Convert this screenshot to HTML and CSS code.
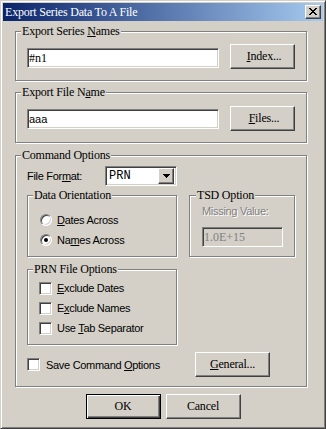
FILE: index.html
```html
<!DOCTYPE html>
<html>
<head>
<meta charset="utf-8">
<link rel="stylesheet" href="styles.css">
</head>
<body>
<div class="window">
  <div class="titlebar">
    <span class="title">Export Series Data To A File</span>
    <div class="close raised">
      <svg width="8" height="7" viewBox="0 0 8 7" shape-rendering="crispEdges"><path d="M0 0h2v1H0zM6 0h2v1H6zM1 1h2v1H1zM5 1h2v1H5zM2 2h4v1H2zM3 3h2v1H3zM2 4h4v1H2zM1 5h2v1H1zM5 5h2v1H5zM0 6h2v1H0zM6 6h2v1H6z" fill="#000"/></svg>
    </div>
  </div>
  <div class="client">
    <fieldset class="group g1">
      <legend>Export Series <u>N</u>ames</legend>
      <div class="row">
        <div class="edit serif-text e1">#n1</div>
        <div class="btn raised side-btn"><span><u>I</u>ndex...</span></div>
      </div>
    </fieldset>

    <fieldset class="group g2">
      <legend>Export File N<u>a</u>me</legend>
      <div class="row">
        <div class="edit e2">aaa</div>
        <div class="btn raised side-btn"><span><u>F</u>iles...</span></div>
      </div>
    </fieldset>

    <fieldset class="group g3">
      <legend>Command Options</legend>
      <div class="ff-row">
        <span class="ff-label">File For<u>m</u>at:</span>
        <div class="combo">
          <span class="combo-text">PRN</span>
          <div class="combo-btn raised">
            <svg width="7" height="4" viewBox="0 0 7 4" shape-rendering="crispEdges"><path d="M0 0h7v1H0zM1 1h5v1H1zM2 2h3v1H2zM3 3h1v1H3z" fill="#000"/></svg>
          </div>
        </div>
      </div>

      <div class="subgrid">
        <fieldset class="group sub orient">
          <legend>Data Orientation</legend>
          <div class="opt"><span class="radio"></span><span class="opt-label"><u>D</u>ates Across</span></div>
          <div class="opt"><span class="radio checked"></span><span class="opt-label">Na<u>m</u>es Across</span></div>
        </fieldset>

        <fieldset class="group sub tsd">
          <legend>TSD Option</legend>
          <div class="disabled-label">Missing Value:</div>
          <div class="edit disabled-edit">1.0E+15</div>
        </fieldset>

        <fieldset class="group sub prn">
          <legend>PRN File Options</legend>
          <div class="opt"><span class="chk"></span><span class="opt-label"><u>E</u>xclude Dates</span></div>
          <div class="opt"><span class="chk"></span><span class="opt-label">E<u>x</u>clude Names</span></div>
          <div class="opt"><span class="chk"></span><span class="opt-label">Use <u>T</u>ab Separator</span></div>
        </fieldset>
      </div>

      <div class="save-row">
        <div class="save-opt"><span class="chk"></span><span class="opt-label save-label">Save Command <u>O</u>ptions</span></div>
        <div class="btn raised wide-btn"><span><u>G</u>eneral...</span></div>
      </div>
    </fieldset>

    <div class="actions">
      <div class="btn default-btn wide-btn"><span>OK</span></div>
      <div class="btn raised wide-btn"><span>Cancel</span></div>
    </div>
  </div>
</div>
</body>
</html>
```

FILE: styles.css
```css
* {
  box-sizing: border-box;
}

html,
body {
  margin: 0;
  padding: 0;
  background: #d4d0c8;
}

body {
  font-family: "Liberation Sans", Arial, sans-serif;
  font-size: 11px;
  color: #000;
}

.window {
  width: 326px;
  height: 429px;
  background: #d4d0c8;
  border: 1px solid;
  border-color: #d4d0c8 #404040 #404040 #d4d0c8;
  box-shadow: inset 1px 1px #fff, inset -1px -1px #808080;
  padding: 2px;
  display: flex;
  flex-direction: column;
}

.titlebar {
  height: 18px;
  flex: none;
  display: flex;
  align-items: center;
  padding: 0 2px 0 2px;
  background: linear-gradient(to right, #0a246a, #a6caf0);
}

.title {
  color: #fff;
  font-family: "Liberation Serif", "Times New Roman", serif;
  font-size: 12px;
  letter-spacing: -0.2px;
  line-height: 18px;
}

.raised {
  background: #d4d0c8;
  border: 1px solid;
  border-color: #fff #404040 #404040 #fff;
  box-shadow: inset -1px -1px #808080, inset 1px 1px #d4d0c8;
}

.close {
  margin-left: auto;
  width: 16px;
  height: 14px;
  display: flex;
  align-items: center;
  justify-content: center;
  padding-bottom: 1px;
}

.close svg {
  display: block;
}

.client {
  flex: 1;
  display: flex;
  flex-direction: column;
  padding: 3px 0 0 12px;
}

.group {
  margin: 0;
  min-width: 0;
  border: 1px solid #808080;
  box-shadow: inset 1px 1px #fff, 1px 1px #fff;
}

.group > legend {
  font-family: "Liberation Serif", "Times New Roman", serif;
  font-size: 12px;
  letter-spacing: -0.2px;
  line-height: 15px;
  height: 15px;
  padding: 0 1px;
  margin-left: -6px;
  background: #d4d0c8;
  white-space: nowrap;
}

.g1 {
  width: 292px;
  padding: 5px 11px 11px 11px;
}

.g2 {
  width: 292px;
  margin-top: 4px;
  padding: 6px 11px 11px 11px;
}

.g3 {
  width: 292px;
  margin-top: 5px;
  padding: 3px 11px 9px 11px;
}

.row {
  display: flex;
  align-items: flex-start;
  gap: 11px;
}

.edit {
  height: 20px;
  border: 1px solid;
  border-color: #808080 #fff #fff #808080;
  box-shadow: inset 1px 1px #404040, inset -1px -1px #d4d0c8;
  background: #fff;
  padding: 0 2px 0 1px;
  display: flex;
  align-items: center;
  white-space: nowrap;
}

.serif-text {
  font-family: "Liberation Serif", "Times New Roman", serif;
  font-size: 12px;
}

.e1 {
  width: 192px;
  margin-top: 4px;
}

.e2 {
  width: 192px;
  margin-top: 3px;
  font-size: 11px;
}

.btn {
  height: 25px;
  display: flex;
  align-items: center;
  justify-content: center;
  font-family: "Liberation Serif", "Times New Roman", serif;
  font-size: 12px;
  letter-spacing: -0.2px;
  padding-bottom: 1px;
}

.side-btn {
  width: 65px;
  padding-left: 3px;
}

.wide-btn {
  width: 75px;
}

.default-btn {
  background: #d4d0c8;
  border: 1px solid #000;
  box-shadow: inset 1px 1px #fff, inset -1px -1px #404040, inset -2px -2px #808080;
}

.ff-row {
  display: flex;
  align-items: center;
  height: 20px;
}

.ff-label {
  width: 78px;
  letter-spacing: -0.3px;
}

.combo {
  width: 72px;
  height: 20px;
  border: 1px solid;
  border-color: #808080 #fff #fff #808080;
  box-shadow: inset 1px 1px #404040, inset -1px -1px #d4d0c8;
  background: #fff;
  padding: 2px;
  display: flex;
  align-items: center;
}

.combo-text {
  flex: 1;
  font-family: "Liberation Mono", "Courier New", monospace;
  font-size: 12px;
  padding-left: 1px;
}

.combo-btn {
  width: 16px;
  height: 16px;
  display: flex;
  align-items: center;
  justify-content: center;
}

.combo-btn svg {
  display: block;
}

.subgrid {
  margin-top: 2px;
  display: grid;
  grid-template-columns: 150px 106px;
  column-gap: 12px;
  row-gap: 5px;
}

.orient {
  padding: 7px 8px 6px 11px;
}

.tsd {
  padding: 1px 8px 6px 12px;
}

.prn {
  grid-column: 1;
  padding: 1px 8px 6px 11px;
}

.opt {
  display: flex;
  align-items: center;
  height: 20px;
}

.opt-label {
  margin-left: 5px;
  letter-spacing: -0.3px;
  white-space: nowrap;
}

.radio {
  width: 12px;
  height: 12px;
  margin-left: 1px;
  border-radius: 50%;
  border: 1px solid;
  border-color: #808080 #fff #fff #808080;
  box-shadow: inset 1px 1px #404040, inset -1px -1px #d4d0c8;
  background: #fff;
  position: relative;
  flex: none;
}

.radio.checked::after {
  content: "";
  position: absolute;
  left: 3px;
  top: 3px;
  width: 4px;
  height: 4px;
  border-radius: 50%;
  background: #000;
}

.chk {
  width: 13px;
  height: 13px;
  border: 1px solid;
  border-color: #808080 #fff #fff #808080;
  box-shadow: inset 1px 1px #404040, inset -1px -1px #d4d0c8;
  background: #fff;
  flex: none;
}

.disabled-label {
  height: 15px;
  line-height: 15px;
  color: #808080;
  text-shadow: 1px 1px 0 #fff;
  letter-spacing: -0.3px;
  white-space: nowrap;
}

.disabled-edit {
  width: 81px;
  margin-top: 8px;
  background: #d4d0c8;
  color: #808080;
  font-family: "Liberation Serif", "Times New Roman", serif;
  font-size: 12px;
}

.save-row {
  margin-top: 7px;
  display: flex;
  align-items: center;
  height: 25px;
}

.save-opt {
  width: 168px;
  display: flex;
  align-items: center;
}

.save-label {
  margin-left: 6px;
}

.actions {
  margin-top: 7px;
  display: flex;
  justify-content: center;
  gap: 5px;
  padding-right: 12px;
}
```
